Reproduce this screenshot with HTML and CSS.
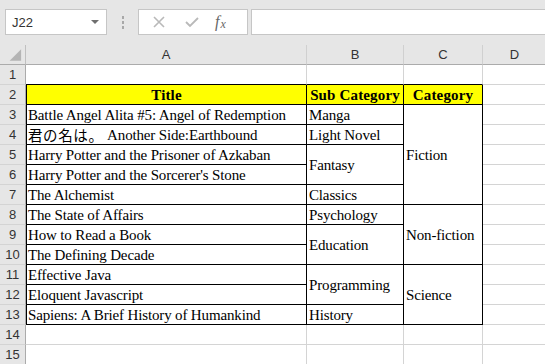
FILE: index.html
```html
<!DOCTYPE html>
<html>
<head>
<meta charset="utf-8">
<link rel="stylesheet" href="styles.css">
</head>
<body>
<div class="toolbar">
  <div class="namebox"><span class="ref">J22</span><span class="caret"></span></div>
  <div class="sep"><span class="dot"></span><span class="dot"></span><span class="dot"></span></div>
  <div class="fxbtns">
    <svg class="ico" width="14" height="14" viewBox="0 0 14 14"><path d="M2 2 L12 12 M12 2 L2 12" stroke="#b9b9b9" stroke-width="1.6" fill="none"/></svg>
    <svg class="ico" width="16" height="14" viewBox="0 0 16 14"><path d="M2 7 L6 11 L14 3" stroke="#b9b9b9" stroke-width="1.8" fill="none"/></svg>
    <span class="fx">f<span class="fxx">x</span></span>
  </div>
  <div class="input"></div>
</div>
<div class="sheet">
  <div class="ch corner"><svg width="26" height="20" viewBox="0 0 26 20"><polygon points="10,16 22,16 22,4" fill="#b4b4b4"/></svg></div>
  <div class="ch">A</div><div class="ch">B</div><div class="ch">C</div><div class="ch">D</div>

  <div class="rh">1</div><div class="c bb"></div><div class="c bb"></div><div class="c bb"></div><div class="c"></div>

  <div class="rh">2</div><div class="c k bl h">Title</div><div class="c k h">Sub Category</div><div class="c k h">Category</div><div class="c"></div>

  <div class="rh">3</div><div class="c k bl">Battle Angel Alita #5: Angel of Redemption</div><div class="c k">Manga</div><div class="c k m s5">Fiction</div><div class="c"></div>
  <div class="rh">4</div><div class="c k bl"><span class="jp">君の名は。</span>&nbsp;Another Side:Earthbound</div><div class="c k">Light Novel</div><div class="c"></div>
  <div class="rh">5</div><div class="c k bl">Harry Potter and the Prisoner of Azkaban</div><div class="c k m s2">Fantasy</div><div class="c"></div>
  <div class="rh">6</div><div class="c k bl">Harry Potter and the Sorcerer's Stone</div><div class="c"></div>
  <div class="rh">7</div><div class="c k bl">The Alchemist</div><div class="c k">Classics</div><div class="c"></div>
  <div class="rh">8</div><div class="c k bl">The State of Affairs</div><div class="c k">Psychology</div><div class="c k m s3">Non-fiction</div><div class="c"></div>
  <div class="rh">9</div><div class="c k bl">How to Read a Book</div><div class="c k m s2">Education</div><div class="c"></div>
  <div class="rh">10</div><div class="c k bl">The Defining Decade</div><div class="c"></div>
  <div class="rh">11</div><div class="c k bl">Effective Java</div><div class="c k m s2">Programming</div><div class="c k m s3">Science</div><div class="c"></div>
  <div class="rh">12</div><div class="c k bl">Eloquent Javascript</div><div class="c"></div>
  <div class="rh">13</div><div class="c k bl">Sapiens: A Brief History of Humankind</div><div class="c k">History</div><div class="c"></div>

  <div class="rh">14</div><div class="c"></div><div class="c"></div><div class="c"></div><div class="c"></div>
  <div class="rh">15</div><div class="c"></div><div class="c"></div><div class="c"></div><div class="c"></div>
</div>
</body>
</html>
```

FILE: styles.css
```css
html, body {
  margin: 0;
  padding: 0;
  background: #ffffff;
}
body {
  width: 545px;
  height: 364px;
  overflow: hidden;
  font-family: "Liberation Serif", "Noto Sans CJK JP", serif;
}
.toolbar {
  height: 45px;
  box-sizing: border-box;
  background: #e6e6e6;
  display: flex;
  align-items: flex-start;
  padding: 9px 0 0 5px;
}
.namebox {
  width: 102px;
  height: 26px;
  box-sizing: border-box;
  border: 1px solid #c6c6c6;
  background: #ffffff;
  display: flex;
  align-items: center;
  justify-content: space-between;
  padding: 0 7px 0 6px;
  font-family: "Liberation Sans", sans-serif;
  font-size: 13px;
  color: #333333;
}
.caret {
  width: 0;
  height: 0;
  border-left: 4px solid transparent;
  border-right: 4px solid transparent;
  border-top: 4px solid #6f6f6f;
}
.sep {
  width: 31px;
  height: 26px;
  display: flex;
  flex-direction: column;
  align-items: center;
  justify-content: center;
  gap: 2px;
}
.dot {
  width: 2px;
  height: 3px;
  background: #a8a8a8;
}
.fxbtns {
  width: 110px;
  height: 26px;
  box-sizing: border-box;
  border: 1px solid #c6c6c6;
  background: #ffffff;
  display: flex;
  align-items: center;
  padding-left: 13px;
}
.ico:first-child { margin-right: 18px; }
.fxbtns svg:nth-child(2) { margin-right: 15px; }
.fx {
  font-family: "Liberation Serif", serif;
  font-style: italic;
  font-size: 16px;
  color: #666666;
  line-height: 1;
}
.fxx {
  font-size: 12px;
  position: relative;
  top: 1px;
  margin-left: 1px;
}
.input {
  flex: 1;
  margin-left: 3px;
  height: 26px;
  box-sizing: border-box;
  border: 1px solid #c6c6c6;
  border-right: none;
  background: #ffffff;
}
.sheet {
  display: grid;
  grid-template-columns: 26px 281px 97px 79px 64px;
  grid-template-rows: repeat(16, 20px);
}
.ch {
  background: #e6e6e6;
  box-sizing: border-box;
  border-right: 1px solid #d0d0d0;
  border-bottom: 1px solid #ababab;
  font-family: "Liberation Sans", sans-serif;
  font-size: 13px;
  color: #333333;
  display: flex;
  align-items: center;
  justify-content: center;
}
.corner {
  border-right: 1px solid #c0c0c0;
  align-items: flex-start;
  justify-content: flex-start;
}
.rh {
  background: #e6e6e6;
  box-sizing: border-box;
  border-right: 1px solid #ababab;
  border-bottom: 1px solid #d4d4d4;
  font-family: "Liberation Sans", sans-serif;
  font-size: 13px;
  color: #333333;
  display: flex;
  align-items: center;
  justify-content: center;
}
.c {
  box-sizing: border-box;
  border-right: 1px solid #d4d4d4;
  border-bottom: 1px solid #d4d4d4;
  font-size: 15px;
  letter-spacing: -0.15px;
  line-height: 18px;
  color: #000000;
  display: flex;
  align-items: flex-end;
  padding: 0 0 0 2px;
  white-space: nowrap;
  overflow: hidden;
}
.c.k {
  border-right-color: #000000;
  border-bottom-color: #000000;
}
.c.bb {
  border-bottom-color: #000000;
}
.c.bl {
  border-left: 1px solid #000000;
  padding-left: 1px;
}
.c.h {
  background: #ffff00;
  font-weight: bold;
  letter-spacing: 0.15px;
  justify-content: center;
  padding-left: 0;
}
.c.m {
  align-items: center;
}
.s2 { grid-row: span 2; }
.s3 { grid-row: span 3; }
.s5 { grid-row: span 5; }
.jp {
  font-family: "Noto Sans CJK JP", sans-serif;
  font-size: 14.5px;
  letter-spacing: 0.6px;
}
```
